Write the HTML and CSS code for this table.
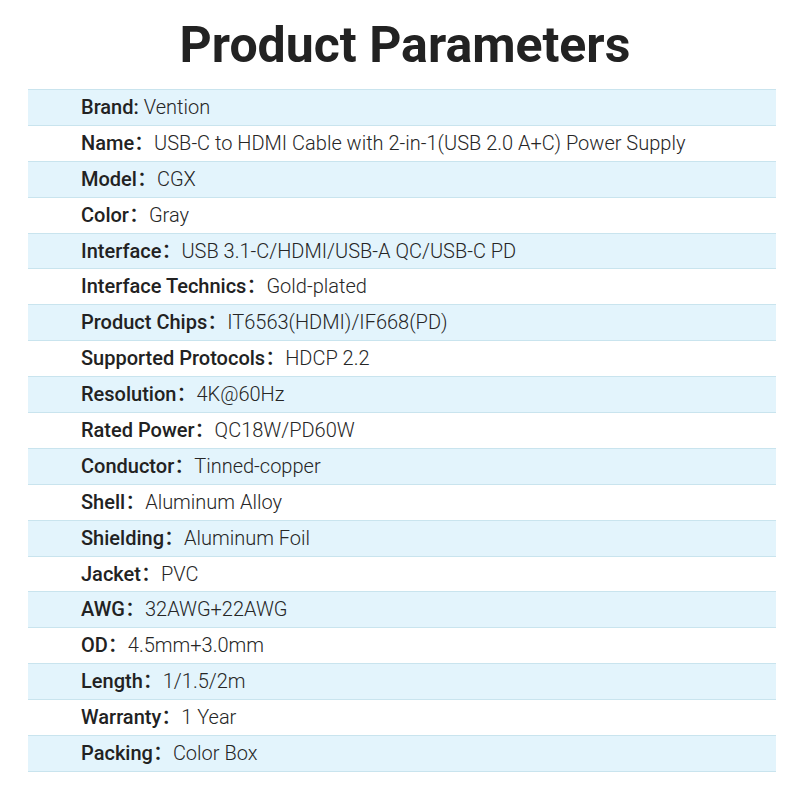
FILE: index.html
```html
<!DOCTYPE html>
<html>
<head>
<meta charset="utf-8">
<link rel="stylesheet" href="styles.css">
</head>
<body>
<div class="page">
  <h1 class="title">Product Parameters</h1>
  <div class="table">
    <div class="row odd"><span class="label">Brand:</span> <span class="value">Vention</span></div>
    <div class="row"><span class="label">Name<span class="colon">：</span></span><span class="value">USB-C to HDMI Cable with 2-in-1(USB 2.0 A+C) Power Supply</span></div>
    <div class="row odd"><span class="label">Model<span class="colon">：</span></span><span class="value">CGX</span></div>
    <div class="row"><span class="label">Color<span class="colon">：</span></span><span class="value">Gray</span></div>
    <div class="row odd"><span class="label">Interface<span class="colon">：</span></span><span class="value">USB 3.1-C/HDMI/USB-A QC/USB-C PD</span></div>
    <div class="row"><span class="label">Interface Technics<span class="colon">：</span></span><span class="value">Gold-plated</span></div>
    <div class="row odd"><span class="label">Product Chips<span class="colon">：</span></span><span class="value">IT6563(HDMI)/IF668(PD)</span></div>
    <div class="row"><span class="label">Supported Protocols<span class="colon">：</span></span><span class="value">HDCP 2.2</span></div>
    <div class="row odd"><span class="label">Resolution<span class="colon">：</span></span><span class="value">4K@60Hz</span></div>
    <div class="row"><span class="label">Rated Power<span class="colon">：</span></span><span class="value">QC18W/PD60W</span></div>
    <div class="row odd"><span class="label">Conductor<span class="colon">：</span></span><span class="value">Tinned-copper</span></div>
    <div class="row"><span class="label">Shell<span class="colon">：</span></span><span class="value">Aluminum Alloy</span></div>
    <div class="row odd"><span class="label">Shielding<span class="colon">：</span></span><span class="value">Aluminum Foil</span></div>
    <div class="row"><span class="label">Jacket<span class="colon">：</span></span><span class="value">PVC</span></div>
    <div class="row odd"><span class="label">AWG<span class="colon">：</span></span><span class="value">32AWG+22AWG</span></div>
    <div class="row"><span class="label">OD<span class="colon">：</span></span><span class="value">4.5mm+3.0mm</span></div>
    <div class="row odd"><span class="label">Length<span class="colon">：</span></span><span class="value">1/1.5/2m</span></div>
    <div class="row"><span class="label">Warranty<span class="colon">：</span></span><span class="value">1 Year</span></div>
    <div class="row odd"><span class="label">Packing<span class="colon">：</span></span><span class="value">Color Box</span></div>
  </div>
</div>
</body>
</html>
```
FILE: styles.css
```css
html, body {
  margin: 0;
  padding: 0;
  background: #ffffff;
}
.page {
  width: 800px;
  height: 800px;
  font-family: Roboto, "Noto Sans CJK SC", sans-serif;
  color: #222;
}
.title {
  margin: 0;
  padding-top: 15px;
  padding-left: 10px;
  height: 89px;
  box-sizing: border-box;
  font-size: 50px;
  line-height: 60px;
  font-weight: 700;
  text-align: center;
  color: #222222;
}
.table {
  margin-left: 28px;
  width: 748px;
  border-top: 1px solid #c9e4ee;
}
.row {
  height: 34.9px;
  line-height: 34.9px;
  overflow: hidden;
  border-bottom: 1px solid #c9e4ee;
  padding-left: 53px;
  font-size: 20px;
  white-space: pre;
}
.row.odd {
  background: #e3f4fc;
}
.label {
  font-weight: 500;
  color: #222;
}
.colon {
  font-family: "Noto Sans CJK SC", sans-serif;
  font-weight: 500;
  line-height: 1;
}
.value {
  font-weight: 300;
  color: #262626;
}
```
